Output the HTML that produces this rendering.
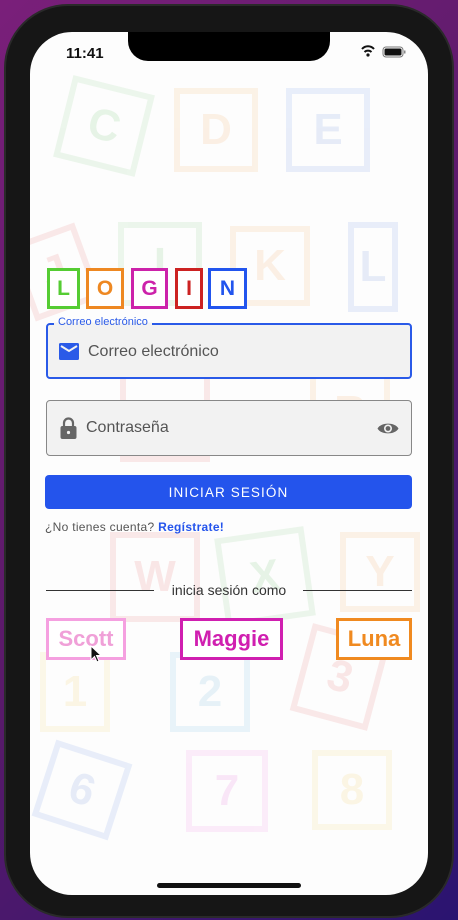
<!DOCTYPE html>
<html><head><meta charset="utf-8"><style>
*{margin:0;padding:0;box-sizing:border-box}
body{width:458px;height:920px;overflow:hidden;background:linear-gradient(135deg,#7a1f7a 0%,#5a1a6a 50%,#2a1470 100%);font-family:"Liberation Sans",sans-serif;position:relative}
.frame{position:absolute;left:4px;top:4px;width:450px;height:914px;border-radius:64px;background:#161616;border:2px solid #2a2a2a}
.screen{position:absolute;left:30px;top:32px;width:398px;height:863px;border-radius:42px;background:#fdfdfd;overflow:hidden}
.notch{position:absolute;left:128px;top:32px;width:202px;height:29px;background:#000;border-radius:0 0 20px 20px}
.abs{position:absolute}
.blk{position:absolute;border:6px solid;opacity:.11;font-weight:bold;font-size:44px;display:flex;align-items:center;justify-content:center}
.lb{position:absolute;top:268px;height:41px;border:3px solid;font-weight:bold;font-size:21px;display:flex;align-items:center;justify-content:center;background:#fff}
.name{position:absolute;top:618px;height:42px;border:3.5px solid;font-weight:bold;font-size:22px;display:flex;align-items:center;justify-content:center;background:#fff}
</style></head><body>
<div class="frame"></div>
<div class="screen">
 <div class="blk" style="left:32px;top:52px;width:84px;height:84px;color:#3a3;border-color:#6b6;transform:rotate(14deg)">C</div>
 <div class="blk" style="left:144px;top:56px;width:84px;height:84px;color:#e82;border-color:#e93">D</div>
 <div class="blk" style="left:256px;top:56px;width:84px;height:84px;color:#36c;border-color:#47d">E</div>
 <div class="blk" style="left:-10px;top:200px;width:70px;height:80px;color:#d33;border-color:#d44;transform:rotate(-20deg)">J</div>
 <div class="blk" style="left:88px;top:190px;width:84px;height:84px;color:#3a3;border-color:#6b6">I</div>
 <div class="blk" style="left:200px;top:194px;width:80px;height:80px;color:#e82;border-color:#e93">K</div>
 <div class="blk" style="left:318px;top:190px;width:50px;height:90px;color:#36c;border-color:#47d">L</div>
 <div class="blk" style="left:90px;top:340px;width:90px;height:90px;color:#d33;border-color:#d44">P</div>
 <div class="blk" style="left:280px;top:340px;width:80px;height:80px;color:#e82;border-color:#e93">R</div>
 <div class="blk" style="left:80px;top:500px;width:90px;height:90px;color:#d33;border-color:#d44">W</div>
 <div class="blk" style="left:190px;top:500px;width:90px;height:90px;color:#3a3;border-color:#6b6;transform:rotate(-8deg)">X</div>
 <div class="blk" style="left:310px;top:500px;width:80px;height:80px;color:#e82;border-color:#e93">Y</div>
 <div class="blk" style="left:10px;top:620px;width:70px;height:80px;color:#eb2;border-color:#ec4">1</div>
 <div class="blk" style="left:140px;top:620px;width:80px;height:80px;color:#39c;border-color:#4ad">2</div>
 <div class="blk" style="left:270px;top:600px;width:80px;height:90px;color:#d33;border-color:#d44;transform:rotate(15deg)">3</div>
 <div class="blk" style="left:12px;top:718px;width:80px;height:80px;color:#36c;border-color:#47d;transform:rotate(18deg)">6</div>
 <div class="blk" style="left:156px;top:718px;width:82px;height:82px;color:#d3c;border-color:#e6d">7</div>
 <div class="blk" style="left:282px;top:718px;width:80px;height:80px;color:#eb2;border-color:#ec4">8</div>
 <div class="abs" style="left:127px;top:851px;width:144px;height:5px;border-radius:3px;background:#111"></div>
</div>
<div class="notch"></div>
<div class="abs" style="left:66px;top:45px;font-size:15px;font-weight:bold;color:#111">11:41</div>
<svg class="abs" style="left:360px;top:44px" width="60" height="16" viewBox="0 0 60 16">
 <path d="M2 5 a8 8 0 0 1 12 0" stroke="#111" stroke-width="2" fill="none"/>
 <path d="M4.5 8 a5 5 0 0 1 7 0" stroke="#111" stroke-width="2" fill="none"/>
 <circle cx="8" cy="11" r="1.6" fill="#111"/>
 <rect x="23" y="3" width="20" height="10" rx="3" fill="none" stroke="#777" stroke-width="1"/>
 <rect x="24.5" y="4.5" width="17" height="7" rx="1.5" fill="#111"/>
 <rect x="44" y="6.5" width="1.5" height="3" fill="#888"/>
</svg>

<div class="lb" style="left:47px;width:33px;border-color:#5c3;color:#5c3">L</div>
<div class="lb" style="left:86px;width:38px;border-color:#e82;color:#e82">O</div>
<div class="lb" style="left:131px;width:37px;border-color:#c2a;color:#c2a">G</div>
<div class="lb" style="left:175px;width:28px;border-color:#c22;color:#c22">I</div>
<div class="lb" style="left:208px;width:39px;border-color:#25e;color:#25e">N</div>

<div class="abs" style="left:46px;top:323px;width:366px;height:56px;border:2px solid #2a5ae8;border-radius:4px;background:#f2f2f2"></div>
<div class="abs" style="left:54px;top:316px;padding:0 4px;font-size:11px;color:#2a5ae8;background:linear-gradient(#fdfdfd 55%,#f2f2f2 55%)">Correo electrónico</div>
<svg class="abs" style="left:59px;top:343px" width="20" height="17" viewBox="0 0 20 17"><rect x="0" y="0" width="20" height="17" rx="1.5" fill="#2a5ae8"/><path d="M2 3 L10 8 L18 3" stroke="#f2f2f2" stroke-width="2" fill="none"/></svg>
<div class="abs" style="left:88px;top:343px;font-size:16px;color:#555">Correo electrónico</div>

<div class="abs" style="left:46px;top:400px;width:366px;height:56px;border:1px solid #888;border-radius:4px;background:#f2f2f2"></div>
<svg class="abs" style="left:60px;top:417px" width="17" height="22" viewBox="0 0 17 22"><path d="M4 9 V6 a4.5 4.5 0 0 1 9 0 V9" stroke="#666" stroke-width="2.2" fill="none"/><rect x="0.5" y="9" width="16" height="13" rx="2" fill="#666"/><circle cx="8.5" cy="15.5" r="1.6" fill="#f2f2f2"/></svg>
<div class="abs" style="left:86px;top:419px;font-size:16px;color:#555">Contraseña</div>
<svg class="abs" style="left:377px;top:421px" width="22" height="15" viewBox="0 0 22 15"><path d="M0.5 7.5 C4 1 18 1 21.5 7.5 C18 14 4 14 0.5 7.5Z" fill="#666"/><circle cx="11" cy="7.5" r="4" fill="#f2f2f2"/><circle cx="11" cy="7.5" r="2.4" fill="#666"/></svg>

<div class="abs" style="left:45px;top:475px;width:367px;height:34px;background:#2454ec;border-radius:4px;color:#fff;font-size:13.5px;letter-spacing:1.1px;display:flex;align-items:center;justify-content:center">INICIAR SESIÓN</div>

<div class="abs" style="left:45px;top:520px;font-size:12px;color:#555;letter-spacing:.3px">¿No tienes cuenta? <b style="color:#2454ec">Regístrate!</b></div>

<div class="abs" style="left:46px;top:590px;width:108px;height:1px;background:#333"></div>
<div class="abs" style="left:303px;top:590px;width:109px;height:1px;background:#333"></div>
<div class="abs" style="left:0;width:458px;top:582px;text-align:center;font-size:14px;color:#333">inicia sesión como</div>

<div class="name" style="left:46px;width:80px;border-color:#f5a0e0;color:#f0a0d8">Scott</div>
<div class="name" style="left:180px;width:103px;border-color:#d01fb0;color:#d01fb0">Maggie</div>
<div class="name" style="left:336px;width:76px;border-color:#f08a20;color:#f08a20">Luna</div>
<svg class="abs" style="left:90px;top:645px" width="14" height="20" viewBox="0 0 14 20"><path d="M1 1 L1 15 L4.5 11.5 L7 17 L9 16 L6.5 10.5 L11 10.5 Z" fill="#111" stroke="#fff" stroke-width="1"/></svg>
</body></html>
